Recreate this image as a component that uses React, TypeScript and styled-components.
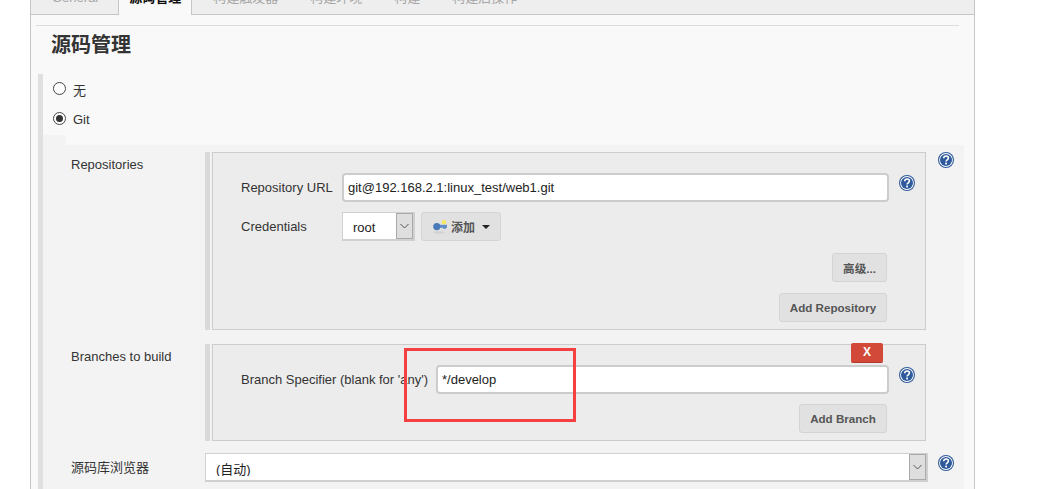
import React from 'react'
import styled, { createGlobalStyle } from 'styled-components'

const GlobalStyles = createGlobalStyle`
  html, body {
    margin: 0;
    height: 100%;
    background: #fff;
    overflow: hidden;
  }
  body {
    font-family: "Liberation Sans", "Noto Sans CJK SC", sans-serif;
    font-size: 13px;
    color: #333;
  }
`

const Page = styled.div`
  position: relative;
  height: 489px;
  padding-left: 30px;
`

const Panel = styled.div`
  display: flex;
  flex-direction: column;
  width: 943px;
  height: 489px;
  overflow: hidden;
  background: #f9f9f9;
  border-left: 1px solid #c6c6c6;
  border-right: 1px solid #c6c6c6;
`

const TabBar = styled.div`
  display: flex;
  flex: none;
  height: 15px;
`

const Tab = styled.div<{ $active?: boolean }>`
  flex: none;
  box-sizing: border-box;
  height: 15px;
  overflow: hidden;
  padding: 0 ${p => (p.$active ? '10px' : '20px')} 0 ${p => (p.$active ? '10px' : '21px')};
  background: ${p => (p.$active ? '#f9f9f9' : '#eee')};
  border-right: 1px solid #c6c6c6;
  border-bottom: ${p => (p.$active ? 'none' : '1px solid #c6c6c6')};
  color: ${p => (p.$active ? '#111' : '#a6a6a6')};
  font-weight: ${p => (p.$active ? 'bold' : 'normal')};
`

const RestTabs = styled.div`
  display: flex;
  flex: 1;
  gap: 32px;
  box-sizing: border-box;
  height: 15px;
  overflow: hidden;
  padding-left: 21px;
  background: #eee;
  border-bottom: 1px solid #c6c6c6;
  color: #a6a6a6;
`

const TabLabel = styled.div`
  margin-top: -9px;
  line-height: 13px;
  white-space: nowrap;
`

const Rule = styled.div`
  flex: none;
  width: 923px;
  height: 1px;
  margin: 10px 0 0 5px;
  background: #ddd;
`

const Heading = styled.h2`
  flex: none;
  margin: 9px 0 19px 20px;
  font-size: 20px;
  line-height: 20px;
  font-weight: bold;
  color: #333;
`

const ScmForm = styled.div`
  flex: 1;
  width: 921px;
  margin-left: 7px;
  border-left: 5px solid #e0e0e0;
`

const RadioRow = styled.div`
  display: flex;
  align-items: center;
  gap: 7px;
  height: 30px;
  padding-left: 10px;
`

const RadioDot = styled.span<{ $checked?: boolean }>`
  display: flex;
  align-items: center;
  justify-content: center;
  box-sizing: border-box;
  width: 13px;
  height: 13px;
  margin-bottom: 2px;
  background: #fff;
  border: 1px solid #444;
  border-radius: 50%;

  &::after {
    content: '';
    display: ${p => (p.$checked ? 'block' : 'none')};
    width: 7px;
    height: 7px;
    border-radius: 50%;
    background: #333;
  }
`

const GitSection = styled.div`
  display: grid;
  grid-template-columns: 23px 898px;
  margin-top: 1px;
`

const Indent = styled.div`
  background: #f3f3f3;
`

const SectionBody = styled.div`
  display: flex;
  flex-direction: column;
  margin-top: 10px;
  padding-top: 7px;
  height: 344px;
  background: #f3f3f3;
`

const FormRow = styled.div<{ $top?: number; $center?: boolean }>`
  display: flex;
  align-items: ${p => (p.$center ? 'center' : 'flex-start')};
  margin-top: ${p => p.$top ?? 0}px;
`

const RowLabel = styled.div<{ $flush?: boolean }>`
  flex: none;
  box-sizing: border-box;
  width: 139px;
  padding: ${p => (p.$flush ? '0' : '5px')} 0 0 5px;
  line-height: 15px;
`

const FieldColumn = styled.div`
  flex: none;
  box-sizing: border-box;
  width: 723px;
  padding: 0 2px 0 2px;
  border-left: 5px solid #d9d9d9;
`

const OptionBox = styled.div<{ $bottom: number }>`
  position: relative;
  display: flex;
  flex-direction: column;
  padding: 20px 10px ${p => p.$bottom}px 28px;
  background: #ececec;
  border: 1px solid #ccc;
`

const OptionRow = styled.div<{ $top?: number }>`
  display: flex;
  align-items: center;
  margin-top: ${p => p.$top ?? 0}px;
`

const OptionLabel = styled.div<{ $width: number }>`
  flex: none;
  width: ${p => p.$width}px;
  white-space: nowrap;
`

const TextField = styled.input`
  flex: 1;
  min-width: 0;
  box-sizing: border-box;
  height: 29px;
  padding: 0 4px;
  background: #fff;
  border: 2px solid #ccc;
  border-radius: 4px;
  outline: none;
  font: 13px "Liberation Sans", sans-serif;
  color: #222;
`

const HelpSlot = styled.div<{ $gap: number; $top: number }>`
  flex: none;
  width: 16px;
  height: 16px;
  align-self: flex-start;
  margin: ${p => p.$top}px 0 0 ${p => p.$gap}px;
`

const SelectBox = styled.div<{ $width: number }>`
  flex: none;
  display: flex;
  box-sizing: border-box;
  width: ${p => p.$width}px;
  height: 29px;
  background: #fff;
  border: 2px solid #d0d0d0;
  border-left-width: 1px;
  border-top-width: 1px;
`

const SelectValue = styled.div<{ $clip?: boolean }>`
  flex: 1;
  height: ${p => (p.$clip ? '22px' : 'auto')};
  overflow: hidden;
  padding-left: 10px;
  line-height: ${p => (p.$clip ? '32px' : '29px')};
  color: #222;
`

const SelectArrow = styled.div`
  flex: none;
  display: flex;
  align-items: center;
  justify-content: center;
  box-sizing: border-box;
  width: 17px;
  background: #dedede;
  border: 1px solid #a9a9a9;
`

const MenuButton = styled.div`
  display: flex;
  align-items: center;
  box-sizing: border-box;
  width: 80px;
  height: 29px;
  margin-left: 6px;
  padding-left: 11px;
  background: #e1e1e1;
  border: 1px solid #d4d4d4;
  border-radius: 3px;
  font-weight: bold;
  font-size: 12px;
  color: #555;
`

const Caret = styled.span`
  width: 0;
  height: 0;
  margin-left: 7px;
  border-left: 4px solid transparent;
  border-right: 4px solid transparent;
  border-top: 4px solid #222;
`

const ButtonRow = styled.div<{ $top: number }>`
  display: flex;
  justify-content: flex-end;
  margin: ${p => p.$top}px 28px 0 0;
`

const ActionButton = styled.button<{ $width: number }>`
  box-sizing: border-box;
  width: ${p => p.$width}px;
  height: 29px;
  padding: 0;
  background: #e1e1e1;
  border: 1px solid #d4d4d4;
  border-radius: 3px;
  font: bold 11.6px "Liberation Sans", "Noto Sans CJK SC", sans-serif;
  color: #555;
`

const DeleteButton = styled.div`
  position: absolute;
  top: -2px;
  right: 42px;
  width: 32px;
  height: 20px;
  box-sizing: border-box;
  background: #d24939;
  border-bottom: 1px solid #b53a2c;
  border-radius: 2px;
  text-align: center;
  line-height: 19px;
  font-size: 12px;
  font-weight: bold;
  color: #fff;
`

const Annotation = styled.div`
  position: absolute;
  left: 404px;
  top: 348px;
  box-sizing: border-box;
  width: 172px;
  height: 74px;
  border: 3px solid #f44040;
`

const HelpIcon = () => (
  <svg width="16" height="16" viewBox="0 0 16 16">
    <circle cx="8" cy="8" r="8" fill="#2f5a9b" />
    <circle cx="8" cy="8" r="6.9" fill="#fff" />
    <circle cx="8" cy="8" r="6" fill="#2f5a9b" />
    <path d="M5.7 6.2c0-1.4 1-2.2 2.4-2.2s2.3.8 2.3 2c0 1.9-2.3 1.8-2.3 3.6" fill="none" stroke="#fff" strokeWidth="1.6" />
    <rect x="7.2" y="10.6" width="1.8" height="1.8" fill="#fff" />
  </svg>
)

const Chevron = () => (
  <svg width="9" height="6" viewBox="0 0 9 6">
    <path d="M.5 1l4 4 4-4" fill="none" stroke="#555" strokeWidth="1" />
  </svg>
)

const KeyIcon = () => (
  <svg width="14" height="14" viewBox="0 0 14 14" style={{ marginRight: 4, flex: 'none' }}>
    <ellipse cx="6" cy="12.5" rx="5.5" ry="1.2" fill="#d2d2d2" />
    <circle cx="11" cy="2.2" r="2.2" fill="#f6e75f" />
    <rect x="5" y="4.8" width="9" height="3" fill="#5f8fc8" />
    <rect x="10" y="7.5" width="3" height="1.2" fill="#4f7fbd" />
    <circle cx="3.8" cy="6.6" r="3.6" fill="#4a7ab8" />
  </svg>
)

const App = () => (
  <Page>
    <GlobalStyles />
    <Panel>
      <TabBar>
        <Tab><TabLabel>General</TabLabel></Tab>
        <Tab $active><TabLabel>源码管理</TabLabel></Tab>
        <RestTabs>
          <TabLabel>构建触发器</TabLabel>
          <TabLabel>构建环境</TabLabel>
          <TabLabel>构建</TabLabel>
          <TabLabel>构建后操作</TabLabel>
        </RestTabs>
      </TabBar>
      <Rule />
      <Heading>源码管理</Heading>
      <ScmForm>
        <RadioRow><RadioDot />无</RadioRow>
        <RadioRow><RadioDot $checked />Git</RadioRow>
        <GitSection>
          <Indent />
          <SectionBody>
            <FormRow>
              <RowLabel>Repositories</RowLabel>
              <FieldColumn>
                <OptionBox $bottom={7}>
                  <OptionRow>
                    <OptionLabel $width={101}>Repository URL</OptionLabel>
                    <TextField defaultValue="git@192.168.2.1:linux_test/web1.git" readOnly />
                    <HelpSlot $gap={10} $top={2}><HelpIcon /></HelpSlot>
                  </OptionRow>
                  <OptionRow $top={10}>
                    <OptionLabel $width={101}>Credentials</OptionLabel>
                    <SelectBox $width={73}>
                      <SelectValue>root</SelectValue>
                      <SelectArrow><Chevron /></SelectArrow>
                    </SelectBox>
                    <MenuButton><KeyIcon />添加<Caret /></MenuButton>
                  </OptionRow>
                  <ButtonRow $top={12}><ActionButton $width={55}>高级...</ActionButton></ButtonRow>
                  <ButtonRow $top={11}><ActionButton $width={108}>Add Repository</ActionButton></ButtonRow>
                </OptionBox>
              </FieldColumn>
              <HelpSlot $gap={10} $top={0}><HelpIcon /></HelpSlot>
            </FormRow>
            <FormRow $top={14}>
              <RowLabel>Branches to build</RowLabel>
              <FieldColumn>
                <OptionBox $bottom={7}>
                  <DeleteButton>X</DeleteButton>
                  <OptionRow>
                    <OptionLabel $width={195}>Branch Specifier (blank for 'any')</OptionLabel>
                    <TextField defaultValue="*/develop" readOnly />
                    <HelpSlot $gap={10} $top={2}><HelpIcon /></HelpSlot>
                  </OptionRow>
                  <ButtonRow $top={10}><ActionButton $width={88}>Add Branch</ActionButton></ButtonRow>
                </OptionBox>
              </FieldColumn>
            </FormRow>
            <FormRow $top={12} $center>
              <RowLabel $flush>源码库浏览器</RowLabel>
              <SelectBox $width={723}>
                <SelectValue $clip>(自动)</SelectValue>
                <SelectArrow><Chevron /></SelectArrow>
              </SelectBox>
              <HelpSlot $gap={10} $top={2}><HelpIcon /></HelpSlot>
            </FormRow>
          </SectionBody>
        </GitSection>
      </ScmForm>
    </Panel>
    <Annotation />
  </Page>
)

export default App
